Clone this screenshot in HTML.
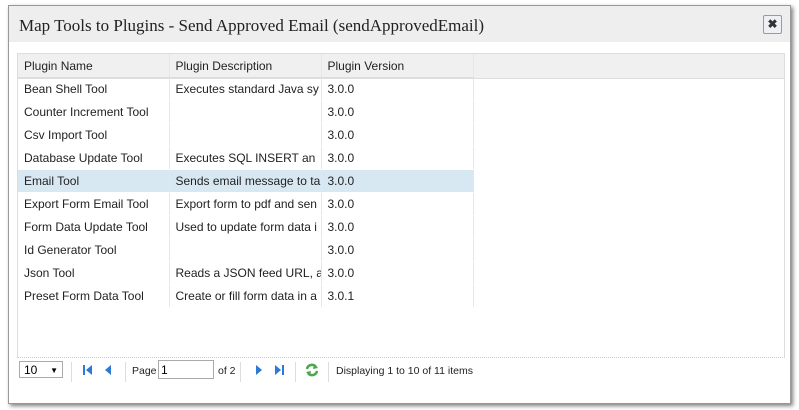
<!DOCTYPE html>
<html><head><style>
body{margin:0;width:799px;height:410px;background:#fff;font-family:"Liberation Sans",Arial,sans-serif;position:relative;overflow:hidden}
.dlg{position:absolute;left:8px;top:5px;width:781px;height:397px;border:1px solid #999;background:#fff;box-shadow:2px 2px 4px rgba(0,0,0,.5)}
.tb{position:absolute;left:0;top:0;width:781px;height:36px;background:#eeeeee;}
.tt{position:absolute;left:10px;top:10px;font-family:"Liberation Serif",serif;font-size:17px;color:#222}
.x{position:absolute;left:754px;top:9px;width:17px;height:17px;border:1px solid #7a9ed6;border-radius:2px;background:#eef0f4;font-size:12px;text-align:center;line-height:17px;font-weight:bold;color:#333}
.grid{position:absolute;left:8px;top:47px;width:766px;height:303px;border:1px solid #ddd;border-bottom:1px dotted #ccc}
table{border-collapse:collapse;font-size:12px;color:#222;position:absolute;left:0;top:0}
td{height:22px;padding:0 0 0 6px;border-right:1px solid #e6e6e6;border-bottom:1px solid #fff;white-space:nowrap;overflow:hidden;max-width:145px}
tr.h td{background:#f0f0f0;border-bottom:1px solid #ddd;height:23px}
tr.sel td{background:#d8e8f3}
.hb{position:absolute;left:0;top:0;width:766px;height:24px;background:#f0f0f0;border-bottom:1px solid #ddd}
.pg{position:absolute;top:357px;font-size:10.5px;color:#222}
.sep{position:absolute;top:362px;width:1px;height:20px;background:#ddd}
svg{position:absolute}
</style></head><body>
<div class="dlg">
<div class="tb"><div class="tt">Map Tools to Plugins - Send Approved Email (sendApprovedEmail)</div><div class="x">✖</div></div>
<div class="grid"><div class="hb"></div>
<table>
<col style="width:151px"><col style="width:152px"><col style="width:152px">
<tr class="h"><td>Plugin Name</td><td>Plugin Description</td><td>Plugin Version</td></tr>
<tr><td>Bean Shell Tool</td><td>Executes standard Java sy</td><td>3.0.0</td></tr>
<tr><td>Counter Increment Tool</td><td></td><td>3.0.0</td></tr>
<tr><td>Csv Import Tool</td><td></td><td>3.0.0</td></tr>
<tr><td>Database Update Tool</td><td>Executes SQL INSERT an</td><td>3.0.0</td></tr>
<tr class="sel"><td>Email Tool</td><td>Sends email message to ta</td><td>3.0.0</td></tr>
<tr><td>Export Form Email Tool</td><td>Export form to pdf and sen</td><td>3.0.0</td></tr>
<tr><td>Form Data Update Tool</td><td>Used to update form data i</td><td>3.0.0</td></tr>
<tr><td>Id Generator Tool</td><td></td><td>3.0.0</td></tr>
<tr><td>Json Tool</td><td>Reads a JSON feed URL, a</td><td>3.0.0</td></tr>
<tr><td>Preset Form Data Tool</td><td>Create or fill form data in a</td><td>3.0.1</td></tr>
</table></div>
</div>
<div style="position:absolute;left:19px;top:361px;width:44px;height:17px;border:1px solid #aaa;font-size:12px;line-height:17px;padding-left:4px;box-sizing:border-box">10<span style="position:absolute;right:4px;font-size:8px">▼</span></div>
<div class="sep" style="left:71px"></div>
<svg style="left:82px;top:364px" width="12" height="12"><rect x="1" y="1" width="2" height="10" fill="#2a7ad6"/><path d="M10 1 L4 6 L10 11Z" fill="#2a7ad6"/></svg>
<svg style="left:103px;top:364px" width="10" height="12"><path d="M8 1 L2 6 L8 11Z" fill="#2a7ad6"/></svg>
<div class="sep" style="left:125px"></div>
<div class="pg" style="left:132px;top:365px">Page</div>
<div style="position:absolute;left:158px;top:360px;width:56px;height:19px;border:1px solid #aaa;font-size:12px;line-height:19px;padding-left:2px;box-sizing:border-box">1</div>
<div class="pg" style="left:218px;top:365px">of 2</div>
<div class="sep" style="left:240px"></div>
<svg style="left:254px;top:364px" width="10" height="12"><path d="M2 1 L8 6 L2 11Z" fill="#2a7ad6"/></svg>
<svg style="left:273px;top:364px" width="12" height="12"><path d="M2 1 L8 6 L2 11Z" fill="#2a7ad6"/><rect x="9" y="1" width="2" height="10" fill="#2a7ad6"/></svg>
<div class="sep" style="left:295px"></div>
<svg style="left:304px;top:362px" width="16" height="16"><path d="M3 7 A5 5 0 0 1 12 5" stroke="#4aa84a" stroke-width="2.5" fill="none"/><path d="M10 2 L14 6 L9 7Z" fill="#4aa84a"/><path d="M13 9 A5 5 0 0 1 4 11" stroke="#4aa84a" stroke-width="2.5" fill="none"/><path d="M6 14 L2 10 L7 9Z" fill="#4aa84a"/></svg>
<div class="sep" style="left:328px"></div>
<div class="pg" style="left:336px;top:365px">Displaying 1 to 10 of 11 items</div>
</body></html>
